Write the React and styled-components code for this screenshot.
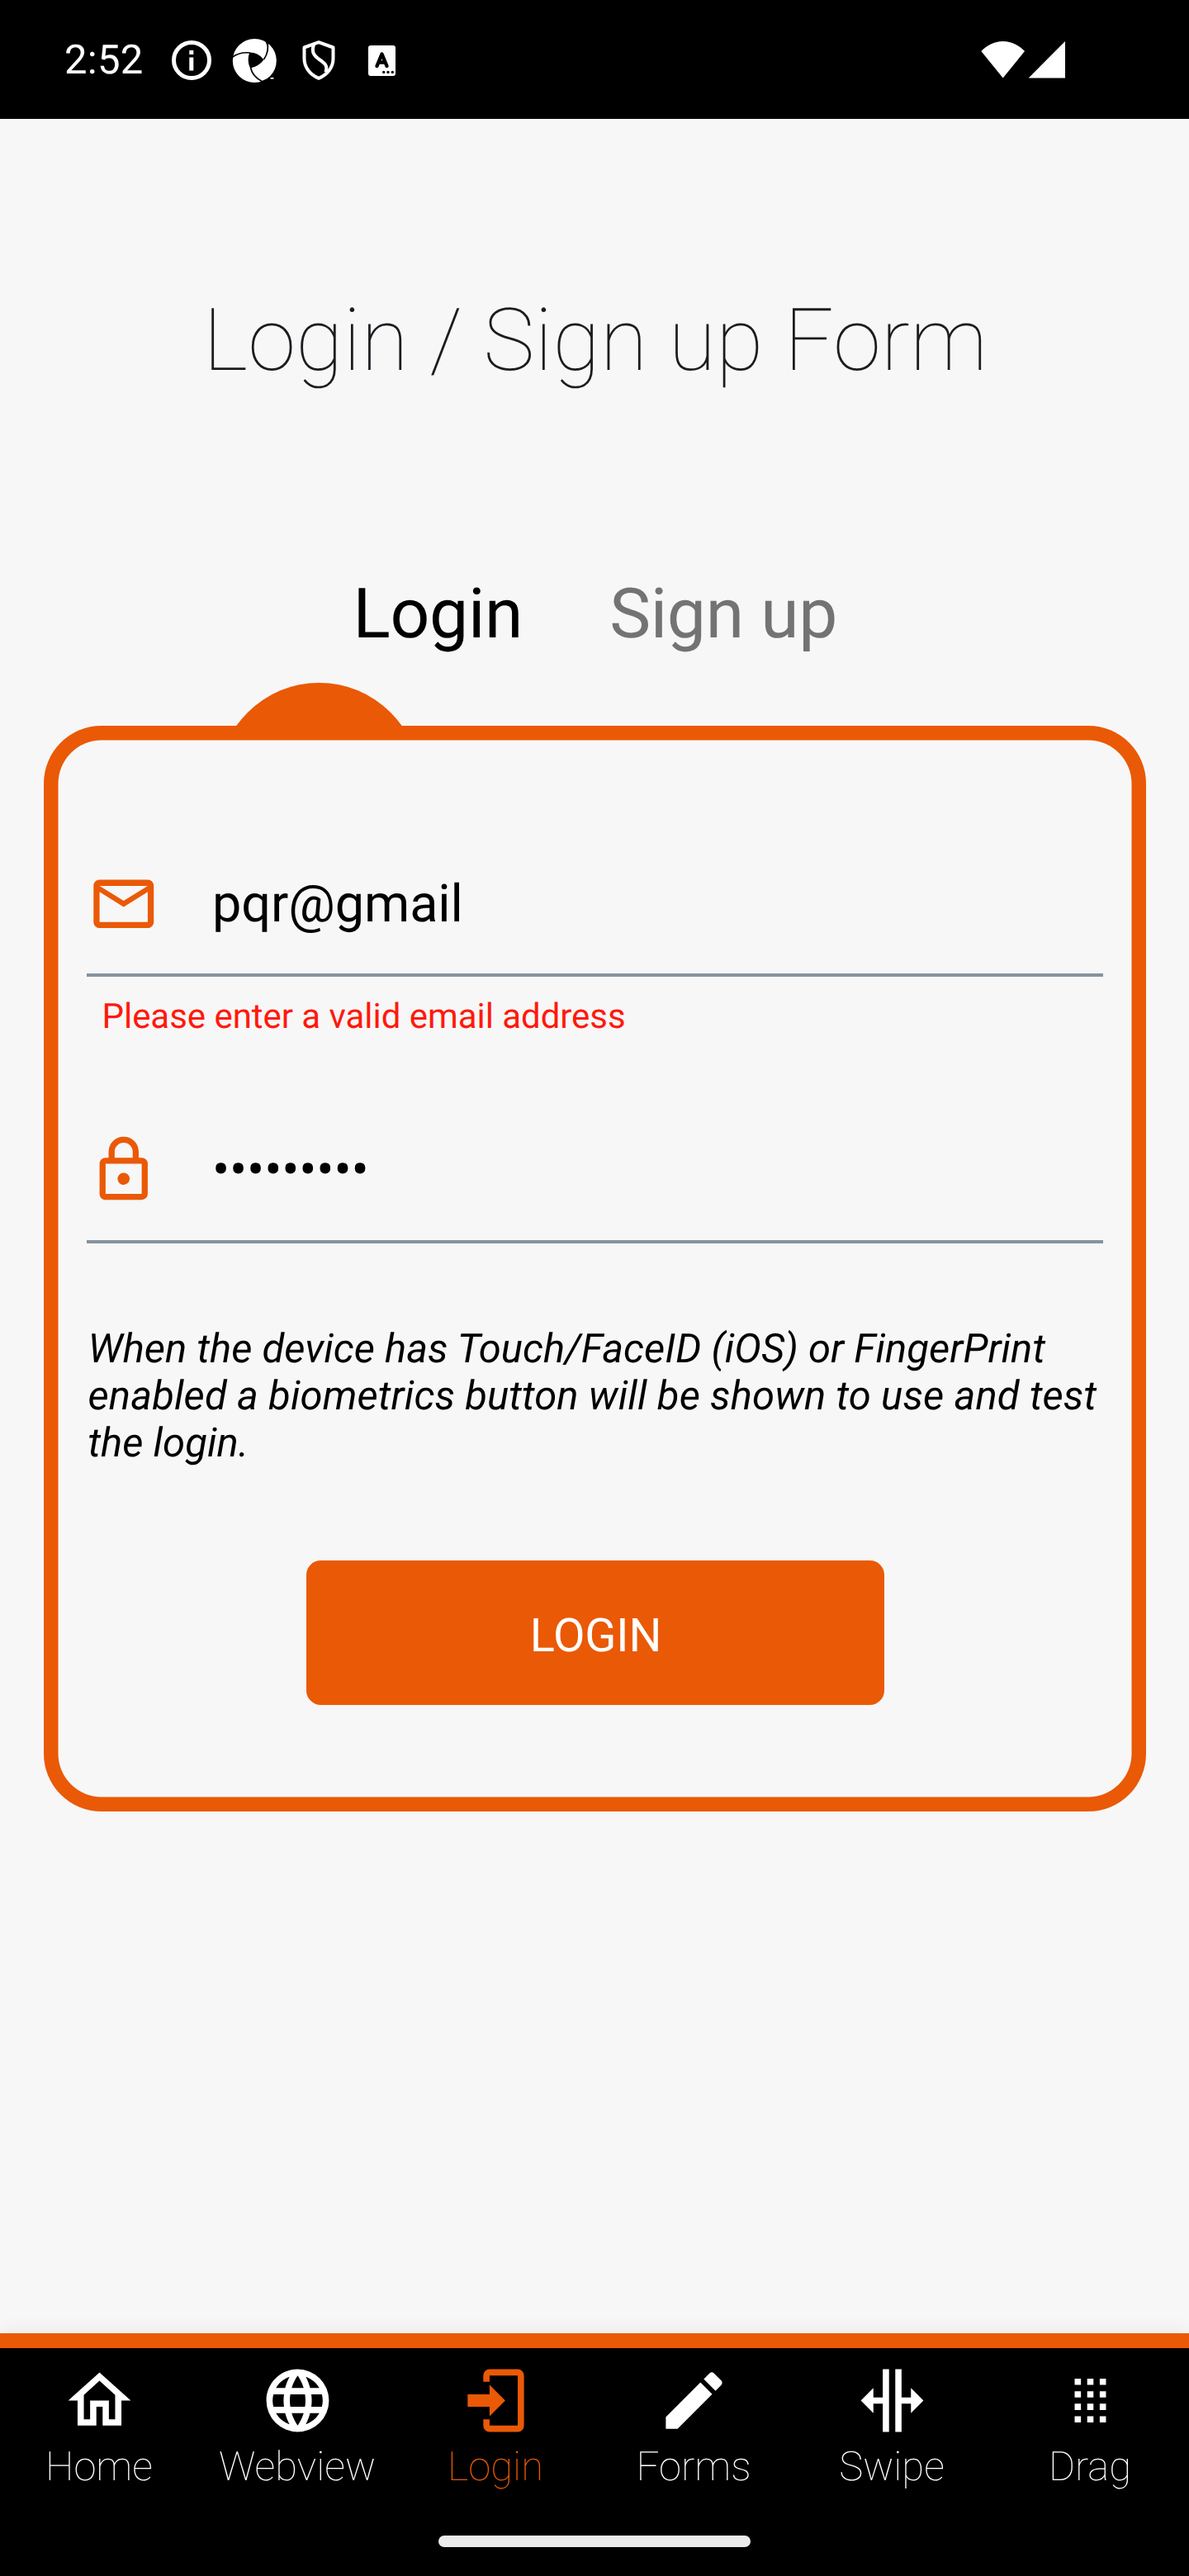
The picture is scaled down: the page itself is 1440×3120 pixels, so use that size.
import React from "react";
import styled, { createGlobalStyle } from "styled-components";

const ORANGE = "#ea5906";

const Global = createGlobalStyle`
  * { box-sizing: border-box; }
  body {
    margin: 0;
    background: #f7f7f7;
    font-family: Roboto, sans-serif;
    text-rendering: geometricPrecision;
  }
`;

const Screen = styled.div`
  width: 1440px;
  height: 3120px;
  display: flex;
  flex-direction: column;
  background: #f7f7f7;
  overflow: hidden;
`;

const StatusBar = styled.header`
  height: 144px;
  flex: none;
  background: #000;
  color: #fff;
  display: flex;
  justify-content: space-between;
  padding: 44px 148px 0 78px;
`;

const StatusGroup = styled.div`
  display: flex;
  align-items: center;
  height: 58px;
  gap: 21px;
`;

const Clock = styled.span`
  font-size: 49px;
  line-height: 58px;
  width: 109px;
  letter-spacing: 0.3px;
`;

const SystemIcons = styled.div`
  display: flex;
  align-items: center;
`;

const Slot = styled.div`
  display: flex;
  margin-left: ${(p) => p.$before}px;
`;

const Main = styled.main`
  flex: 1;
  display: flex;
  flex-direction: column;
`;

const Title = styled.h1`
  margin: 207px 0 0;
  padding-left: 2px;
  text-align: center;
  font-weight: 100;
  font-size: 105px;
  line-height: 124px;
  letter-spacing: 0.06px;
  color: #1c1b1f;
`;

const Tabs = styled.div`
  margin-top: 219px;
  padding-left: 427.5px;
  display: flex;
  gap: 105px;
`;

const Tab = styled.span`
  font-size: 84px;
  line-height: 100px;
  letter-spacing: -0.3px;
  color: ${(p) => (p.$active ? "#000" : "#737373")};
`;

const Notch = styled.div`
  width: 245px;
  height: 52px;
  margin: 33px 0 0 264px;
  overflow: hidden;

  &::before {
    content: "";
    display: block;
    width: 245px;
    height: 245px;
    border-radius: 50%;
    background: ${ORANGE};
  }
`;

const Card = styled.section`
  margin: 0 52px 0 53px;
  height: 1315px;
  border-radius: 70px;
  box-shadow: inset 0 0 0 17.5px ${ORANGE};
  padding: 148px 52px 0;
  display: flex;
  flex-direction: column;
`;

const Field = styled.div`
  height: 156px;
  border-bottom: 4px solid #86939e;
  display: flex;
  align-items: center;
  padding-bottom: 16px;
  color: #000;
`;

const FieldIcon = styled.div`
  display: flex;
  width: 152px;
  padding-left: 1px;
  padding-bottom: ${(p) => p.$lift || 0}px;
`;

const FieldValue = styled.span`
  font-size: 63px;
  line-height: 74px;
  padding-top: ${(p) => (p.$masked ? 0 : 2)}px;
  letter-spacing: ${(p) => (p.$masked ? "-0.2px" : "-0.1px")};
`;

const FieldError = styled.p`
  margin: 21px 0 0;
  padding-left: 18.5px;
  height: 146px;
  font-size: 42px;
  line-height: 56px;
  letter-spacing: -0.04px;
  color: #ff190c;
`;

const Hint = styled.p`
  margin: 99px 0 0;
  padding-left: 1.5px;
  white-space: nowrap;
  font-size: 49px;
  line-height: 57px;
  font-style: italic;
  color: #000;
`;

const HintLine = styled.span`
  display: block;
  letter-spacing: ${(p) => p.$spacing}px;
`;

const LoginButton = styled.button`
  align-self: center;
  margin-top: 114px;
  width: 700px;
  height: 175px;
  border: 0;
  border-radius: 17.5px;
  padding: 6px 0 0 2px;
  background: ${ORANGE};
  color: #fff;
  font: 400 56px/66px Roboto, sans-serif;
  letter-spacing: -0.15px;
`;

const BottomBar = styled.nav`
  flex: none;
  height: 294px;
  border-top: 18px solid ${ORANGE};
  background: #000;
  box-shadow: 0 -4px 20px rgba(0, 0, 0, 0.06);
  display: flex;
  flex-direction: column;
`;

const NavItems = styled.div`
  display: grid;
  grid-template-columns: repeat(6, 1fr);
  padding-top: 18px;
`;

const NavItem = styled.div`
  display: flex;
  flex-direction: column;
  align-items: center;
  color: ${(p) => (p.$active ? ORANGE : "#fff")};
`;

const NavLabel = styled.span`
  margin-top: 6px;
  font-size: 49px;
  font-weight: 100;
  line-height: 58px;
`;

const HomeIndicator = styled.div`
  margin: 54px auto 0;
  width: 378px;
  height: 14px;
  border-radius: 7px;
  background: #ebebeb;
`;

const Icon = ({ d, size, color = "currentColor" }) => (
  <svg width={size} height={size} viewBox="0 0 24 24" fill={color}>
    <path d={d} />
  </svg>
);

const paths = {
  email:
    "M22 6C22 4.9 21.1 4 20 4H4C2.9 4 2 4.9 2 6V18C2 19.1 2.9 20 4 20H20C21.1 20 22 19.1 22 18V6M20 6L12 11L4 6H20M20 18H4V8L12 13L20 8V18Z",
  lock: "M12,17C10.89,17 10,16.1 10,15C10,13.89 10.89,13 12,13A2,2 0 0,1 14,15A2,2 0 0,1 12,17M18,20V10H6V20H18M18,8A2,2 0 0,1 20,10V20A2,2 0 0,1 18,22H6C4.89,22 4,21.1 4,20V10C4,8.89 4.89,8 6,8H7V6A5,5 0 0,1 12,1A5,5 0 0,1 17,6V8H18M12,3A3,3 0 0,0 9,6V8H15V6A3,3 0 0,0 12,3Z",
  home: "M12 5.69L17 10.19V18H15V12H9V18H7V10.19L12 5.69M12 3L2 12H5V20H11V14H13V20H19V12H22L12 3Z",
  web: "M16.36,14C16.44,13.34 16.5,12.68 16.5,12C16.5,11.32 16.44,10.66 16.36,10H19.74C19.9,10.64 20,11.31 20,12C20,12.69 19.9,13.36 19.74,14M14.59,19.56C15.19,18.45 15.65,17.25 15.97,16H18.92C17.96,17.65 16.43,18.93 14.59,19.56M14.34,14H9.66C9.56,13.34 9.5,12.68 9.5,12C9.5,11.32 9.56,10.65 9.66,10H14.34C14.43,10.65 14.5,11.32 14.5,12C14.5,12.68 14.43,13.34 14.34,14M12,19.96C11.17,18.76 10.5,17.43 10.09,16H13.91C13.5,17.43 12.83,18.76 12,19.96M8,8H5.08C6.03,6.34 7.57,5.06 9.4,4.44C8.8,5.55 8.35,6.75 8,8M5.08,16H8C8.35,17.25 8.8,18.45 9.4,19.56C7.57,18.93 6.03,17.65 5.08,16M4.26,14C4.1,13.36 4,12.69 4,12C4,11.31 4.1,10.64 4.26,10H7.64C7.56,10.66 7.5,11.32 7.5,12C7.5,12.68 7.56,13.34 7.64,14M12,4.03C12.83,5.23 13.5,6.57 13.91,8H10.09C10.5,6.57 11.17,5.23 12,4.03M18.92,8H15.97C15.65,6.75 15.19,5.55 14.59,4.44C16.43,5.07 17.96,6.34 18.92,8M12,2C6.47,2 2,6.5 2,12A10,10 0 0,0 12,22A10,10 0 0,0 22,12A10,10 0 0,0 12,2Z",
  login:
    "M10,17V14H3V10H10V7L15,12L10,17M10,2H19A2,2 0 0,1 21,4V20A2,2 0 0,1 19,22H10A2,2 0 0,1 8,20V18H10V20H19V4H10V6H8V4A2,2 0 0,1 10,2Z",
  pencil:
    "M20.71,7.04C21.1,6.65 21.1,6 20.71,5.63L18.37,3.29C18,2.9 17.35,2.9 16.96,3.29L15.12,5.12L18.87,8.87M3,17.25V21H6.75L17.81,9.93L14.06,6.18L3,17.25Z",
  swipe:
    "M18,16V13H15V22H13V2H15V11H18V8L22,12L18,16M2,12L6,16V13H9V22H11V2H9V11H6V8L2,12Z",
  drag: "M7,19V17H9V19H7M11,19V17H13V19H11M15,19V17H17V19H15M7,15V13H9V15H7M11,15V13H13V15H11M15,15V13H17V15H15M7,11V9H9V11H7M11,11V9H13V11H11M15,11V9H17V11H15M7,7V5H9V7H7M11,7V5H13V7H11M15,7V5H17V7H15Z",
};

const InfoIcon = () => (
  <svg width="48" height="48" viewBox="0 0 48 48">
    <circle cx="24" cy="24" r="21.5" fill="none" stroke="#fff" strokeWidth="5" />
    <path fill="#fff" d="M21.3 12h5v5h-5zM21.3 20.5h5v16h-5z" />
  </svg>
);

const ApertureIcon = () => (
  <svg width="54" height="54" viewBox="0 0 54 54">
    <circle cx="27.3" cy="27.5" r="26.5" fill="#fff" />
    <path fill="#000" d="M21.3 17.500Q32 17.500 38.500 26.200Q32.500 34.500 22 36.500Q17.500 27 21.300 17.500Z" />
    <g fill="none" stroke="#000" strokeWidth="1.7">
      <path d="M0 23.500Q9 16.500 22 18" />
      <path d="M42.500 4Q45.500 16 38.500 26" />
      <path d="M37 53Q25 47 22.500 36" />
    </g>
    <path fill="#000" d="M40 3L44 6L43.500 12Z M35 52.500L42 49.500L46 50.500L38 55Z" />
    <path fill="#fff" d="M46.500 48h4v1.600h-4z" />
  </svg>
);

const ShieldIcon = () => (
  <svg
    width="40"
    height="48"
    viewBox="0 0 40 48"
    fill="none"
    stroke="#fff"
    strokeWidth="4"
    strokeLinejoin="round"
  >
    <path d="M20 2.200L37.500 8.500V22C37.500 33 30 41.500 20 45.800C10 41.500 2.500 33 2.500 22V8.500Z" />
    <path d="M14 5C11.500 12 12.500 17 20 22.500C28 28 31 30.500 28.500 38.500" />
  </svg>
);

const KeyboardIcon = () => (
  <svg width="33" height="37" viewBox="0 0 33 37">
    <rect width="33" height="37" rx="3" fill="#fff" />
    <path
      d="M10.500 25L16.500 10.500L22.500 25M12.500 20.500H20.500"
      fill="none"
      stroke="#000"
      strokeWidth="4.4"
      strokeLinecap="round"
      strokeLinejoin="round"
    />
    <g fill="#000">
      <circle cx="18.700" cy="32.400" r="1.700" />
      <circle cx="24" cy="32.400" r="1.700" />
      <circle cx="29.300" cy="32.400" r="1.700" />
    </g>
  </svg>
);

const SignalIcons = () => (
  <svg width="104" height="46" viewBox="0 0 104 46" fill="#fff">
    <path d="M26.700 44.400L.3 12C7 5 16 0 26.700 0S46.300 5 53 12Z" />
    <path d="M57.700 44.400L102 0V44.400Z" />
  </svg>
);

const navItems = [
  ["Home", "home"],
  ["Webview", "web"],
  ["Login", "login"],
  ["Forms", "pencil"],
  ["Swipe", "swipe"],
  ["Drag", "drag"],
];

export default function App() {
  return (
    <Screen>
      <Global />
      <StatusBar>
        <StatusGroup>
          <Clock>2:52</Clock>
          <SystemIcons>
            <Slot $before={0}><InfoIcon /></Slot>
            <Slot $before={25}><ApertureIcon /></Slot>
            <Slot $before={31}><ShieldIcon /></Slot>
            <Slot $before={40}><KeyboardIcon /></Slot>
          </SystemIcons>
        </StatusGroup>
        <StatusGroup>
          <SignalIcons />
        </StatusGroup>
      </StatusBar>
      <Main>
        <Title>Login / Sign up Form</Title>
        <Tabs>
          <Tab $active>Login</Tab>
          <Tab>Sign up</Tab>
        </Tabs>
        <Notch />
        <Card>
          <Field>
            <FieldIcon>
              <Icon d={paths.email} size={87.5} color={ORANGE} />
            </FieldIcon>
            <FieldValue>pqr@gmail</FieldValue>
          </Field>
          <FieldError>Please enter a valid email address</FieldError>
          <Field>
            <FieldIcon $lift={2}>
              <Icon d={paths.lock} size={87.5} color={ORANGE} />
            </FieldIcon>
            <FieldValue $masked>•••••••••</FieldValue>
          </Field>
          <Hint>
            <HintLine $spacing={0.02}>
              When the device has Touch/FaceID (iOS) or FingerPrint
            </HintLine>
            <HintLine $spacing={0.11}>
              enabled a biometrics button will be shown to use and test
            </HintLine>
            <HintLine $spacing={0.02}>the login.</HintLine>
          </Hint>
          <LoginButton>LOGIN</LoginButton>
        </Card>
      </Main>
      <BottomBar>
        <NavItems>
          {navItems.map(([label, icon]) => (
            <NavItem key={label} $active={label === "Login"}>
              <Icon d={paths[icon]} size={91} />
              <NavLabel>{label}</NavLabel>
            </NavItem>
          ))}
        </NavItems>
        <HomeIndicator />
      </BottomBar>
    </Screen>
  );
}
